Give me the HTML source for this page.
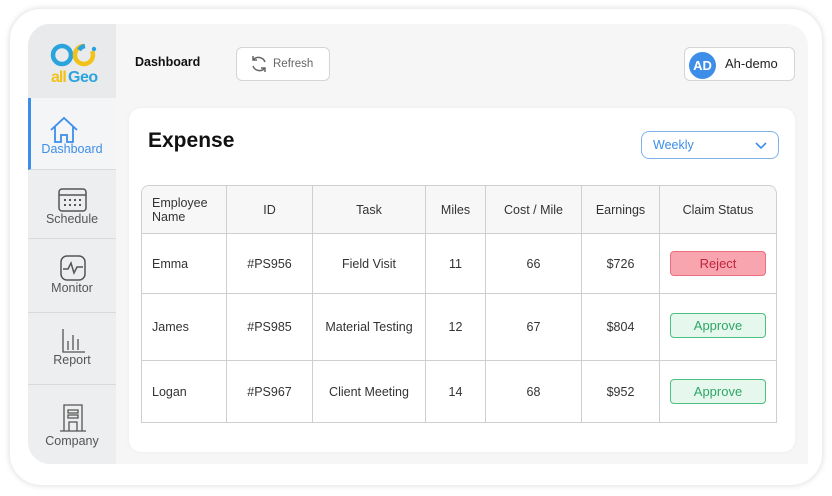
<!DOCTYPE html>
<html><head><meta charset="utf-8"><style>
*{box-sizing:border-box;margin:0;padding:0}
body{width:832px;height:496px;background:#fff;font-family:"Liberation Sans",sans-serif;position:relative;overflow:hidden;color:#222}
.outer{position:absolute;left:9px;top:8px;width:814px;height:478px;border-radius:32px;background:#fff;box-shadow:0 0 6px rgba(0,0,0,.12);border:1px solid #eee}
.app{position:absolute;left:28px;top:24px;width:780px;height:440px;background:#f6f6f7;border-radius:22px 22px 0 22px;overflow:hidden}
.side{position:absolute;left:0;top:0;width:88px;height:440px;background:#eceef0}
.logo{position:absolute;left:0;top:0;width:88px;height:74px;background:#e8eaec}
.item{position:absolute;left:0;width:88px;border-bottom:1px solid #d8dadd;text-align:center;font-size:12.5px;color:#555}
.item span{position:absolute;left:0;width:88px;text-align:center}
.act{background:#f3f5f7;border-left:3px solid #3d8ee8;color:#3d8ee8}
.card{position:absolute;left:101px;top:84px;width:666px;height:344px;background:#fff;border-radius:12px;box-shadow:0 0 4px rgba(0,0,0,.05)}
table{position:absolute;left:12px;top:77px;border-collapse:separate;border-spacing:0;font-size:12.5px;color:#333;border-left:1px solid #cfcfcf;border-top:1px solid #cfcfcf;border-radius:8px 8px 0 0}
td,th{border-right:1px solid #cfcfcf;border-bottom:1px solid #cfcfcf;text-align:center;font-weight:normal}
th{background:#f7f7f7;height:48px}
th:first-child{border-top-left-radius:8px}
th:last-child{border-top-right-radius:8px}
.b{display:inline-block;width:96px;height:25px;line-height:23px;border-radius:4px;font-size:13px}
</style></head><body>
<div class="outer"></div>
<div class="app">
 <div class="side">
  <div class="logo">
   <svg width="88" height="74"><circle cx="34" cy="31" r="9" fill="none" stroke="#2ba3dd" stroke-width="4.5"/><path d="M64 27a9 9 0 1 1 -8 -5" fill="none" stroke="#f2c21a" stroke-width="4.5"/><path d="M51 26a9 9 0 0 1 6 -4" fill="none" stroke="#2ba3dd" stroke-width="4.5"/><circle cx="66" cy="25" r="2.2" fill="#2ba3dd"/>
   <text x="23" y="58" font-family="Liberation Sans" font-weight="bold" font-size="16" letter-spacing="-1" fill="#f2c21a">all</text><text x="40" y="58" font-family="Liberation Sans" font-weight="bold" font-size="16" letter-spacing="-0.5" fill="#2ba3dd">Geo</text></svg>
  </div>
  <div class="item act" style="top:74px;height:72px"><svg width="40" height="34" style="position:absolute;left:15px;top:16px"><path d="M5 16L18 4L31 16M9 13V28H15V21H21V28H27V13" fill="none" stroke="#3d8ee8" stroke-width="1.8"/></svg><span style="top:44px;left:-3px">Dashboard</span></div>
  <div class="item" style="top:146px;height:69px"><svg width="30" height="26" style="position:absolute;left:30px;top:18px"><rect x="1" y="1" width="27" height="22" rx="3" fill="none" stroke="#555" stroke-width="1.5"/><line x1="1" y1="7" x2="28" y2="7" stroke="#555" stroke-width="1.5"/><g fill="#555"><rect x="6" y="11" width="2" height="2"/><rect x="11" y="11" width="2" height="2"/><rect x="16" y="11" width="2" height="2"/><rect x="21" y="11" width="2" height="2"/><rect x="6" y="16" width="2" height="2"/><rect x="11" y="16" width="2" height="2"/><rect x="16" y="16" width="2" height="2"/><rect x="21" y="16" width="2" height="2"/></g></svg><span style="top:42px">Schedule</span></div>
  <div class="item" style="top:215px;height:74px"><svg width="28" height="28" style="position:absolute;left:31px;top:15px"><rect x="2" y="2" width="24" height="24" rx="6" fill="none" stroke="#555" stroke-width="1.5"/><path d="M4 15H9L12 9L15 19L18 13H24" fill="none" stroke="#555" stroke-width="1.5"/></svg><span style="top:42px">Monitor</span></div>
  <div class="item" style="top:289px;height:72px"><svg width="28" height="28" style="position:absolute;left:31px;top:14px"><path d="M4 2V25H26M9 14V23M14 8V23M19 12V23" fill="none" stroke="#555" stroke-width="1.3"/></svg><span style="top:40px">Report</span></div>
  <div class="item" style="top:361px;height:79px;border:none"><svg width="30" height="30" style="position:absolute;left:30px;top:18px"><path d="M6 28V2H24V28M2 28H28M11 28V19H19V28M10 7H20V10H10ZM10 12H20V15H10Z" fill="none" stroke="#555" stroke-width="1.3"/></svg><span style="top:49px">Company</span></div>
 </div>
 <div style="position:absolute;left:107px;top:31px;font-size:12.5px;font-weight:bold;color:#111">Dashboard</div>
 <div style="position:absolute;left:208px;top:23px;width:94px;height:34px;border:1px solid #d5d5d5;border-radius:6px;background:#fff;font-size:11.5px;color:#666;line-height:32px;padding-left:36px">Refresh
  <svg width="20" height="20" style="position:absolute;left:12px;top:6px"><path d="M16 8A7 7 0 0 0 4 6M4 2V6H8M4 12A7 7 0 0 0 16 14M16 18V14H12" fill="none" stroke="#666" stroke-width="1.5"/></svg></div>
 <div style="position:absolute;left:656px;top:23px;width:111px;height:34px;border:1px solid #d5d5d5;border-radius:6px;background:#fff">
  <div style="position:absolute;left:4px;top:4px;width:27px;height:27px;border-radius:50%;background:#3d8ee8;color:#fff;font-weight:bold;font-size:13px;text-align:center;line-height:27px">AD</div>
  <div style="position:absolute;left:40px;top:8px;font-size:13px;color:#222">Ah-demo</div></div>
 <div class="card">
  <div style="position:absolute;left:19px;top:21px;font-size:21px;font-weight:bold;color:#111">Expense</div>
  <div style="position:absolute;left:512px;top:23px;width:138px;height:28px;border:1px solid #7fb3ea;border-radius:8px;color:#3d8ee8;font-size:12.5px;line-height:26px;padding-left:11px">Weekly
   <svg width="14" height="10" style="position:absolute;right:10px;top:9px"><path d="M2 2L7 7L12 2" fill="none" stroke="#3d8ee8" stroke-width="1.6"/></svg></div>
  <table>
   <tr><th style="width:85px;text-align:left;padding-left:10px;line-height:14px">Employee<br>Name</th><th style="width:86px">ID</th><th style="width:113px">Task</th><th style="width:60px">Miles</th><th style="width:96px">Cost / Mile</th><th style="width:78px">Earnings</th><th style="width:117px">Claim Status</th></tr>
   <tr style="height:60px"><td style="text-align:left;padding-left:10px">Emma</td><td>#PS956</td><td>Field Visit</td><td>11</td><td>66</td><td>$726</td><td><span class="b" style="background:#f8a5b0;border:1px solid #ec6d80;color:#c0243c">Reject</span></td></tr>
   <tr style="height:67px"><td style="text-align:left;padding-left:10px">James</td><td>#PS985</td><td>Material Testing</td><td>12</td><td>67</td><td>$804</td><td><span class="b" style="background:#e6f8ee;border:1px solid #4cc07e;color:#2ea566;margin-bottom:3px">Approve</span></td></tr>
   <tr style="height:62px"><td style="text-align:left;padding-left:10px">Logan</td><td>#PS967</td><td>Client Meeting</td><td>14</td><td>68</td><td>$952</td><td><span class="b" style="background:#e6f8ee;border:1px solid #4cc07e;color:#2ea566">Approve</span></td></tr>
  </table>
 </div>
</div>
</body></html>
